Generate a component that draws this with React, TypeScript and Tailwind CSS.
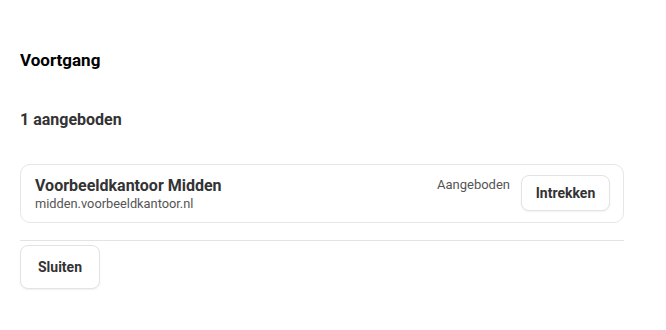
import React from 'react';

export default function App() {
  return (
    <div className="min-h-[330px] w-[666px] bg-white pl-5 pt-[49px] font-['Roboto',sans-serif]">
      <div className="w-[604px]">
        {/* Titel */}
        <h2 className="text-[17px] font-bold leading-[22px] text-black">Voortgang</h2>

        <p className="mt-[39px] text-[16px] font-bold leading-[20px] text-[#333]">1 aangeboden</p>

        {/* Kantoor kaart */}
        <div className="mt-[34px] flex items-start justify-between rounded-[10px] border border-[#e6e6e6] py-[10px] pl-[14px] pr-[13px]">
          <div className="pt-[1px]">
            <div className="text-[16px] font-bold leading-[20px] text-[#333]">Voorbeeldkantoor Midden</div>
            <div className="text-[12.8px] leading-[16px] text-[#555]">midden.voorbeeldkantoor.nl</div>
          </div>
          <div className="flex items-start gap-[11px]">
            <span className="pt-[1px] text-[13px] leading-[18px] text-[#555]">Aangeboden</span>
            <button className="h-[36px] w-[89px] rounded-[8px] border border-[#e3e3e3] bg-white text-[14px] font-bold text-[#333] shadow-[0_1px_2px_rgba(0,0,0,0.06)]">
              Intrekken
            </button>
          </div>
        </div>

        <div className="mt-[17px] border-t border-[#e3e3e3]" />

        <button className="mt-[4px] h-[44px] w-[80px] rounded-[8px] border border-[#e3e3e3] bg-white text-[14px] font-bold text-[#333] shadow-[0_1px_2px_rgba(0,0,0,0.06)]">
          Sluiten
        </button>
      </div>
    </div>
  );
}
